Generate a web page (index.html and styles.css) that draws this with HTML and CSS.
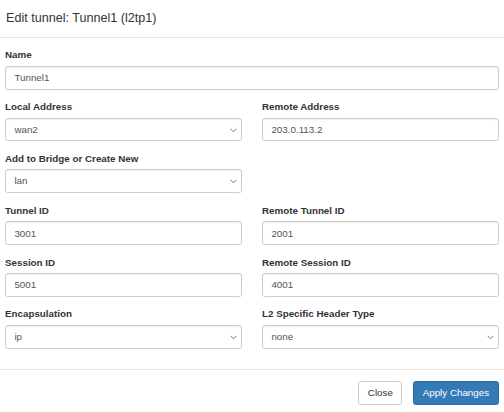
FILE: index.html
```html
<!DOCTYPE html>
<html>
<head>
<meta charset="utf-8">
<link rel="stylesheet" href="styles.css">
</head>
<body>
<div class="modal">
  <div class="modal-header"><h4 class="modal-title">Edit tunnel: Tunnel1 (l2tp1)</h4></div>
  <div class="modal-body">
    <div class="form-group full">
      <label>Name</label>
      <input class="form-control" type="text" value="Tunnel1">
    </div>
    <div class="form-group">
      <label>Local Address</label>
      <div class="select-wrap">
        <select class="form-control"><option>wan2</option></select>
        <svg class="chev" width="7" height="5" viewBox="0 0 7 5"><path d="M0.6 0.8 L3.5 3.8 L6.4 0.8" fill="none" stroke="#777" stroke-width="1"/></svg>
      </div>
    </div>
    <div class="form-group">
      <label>Remote Address</label>
      <input class="form-control" type="text" value="203.0.113.2">
    </div>
    <div class="form-group">
      <label>Add to Bridge or Create New</label>
      <div class="select-wrap">
        <select class="form-control"><option>lan</option></select>
        <svg class="chev" width="7" height="5" viewBox="0 0 7 5"><path d="M0.6 0.8 L3.5 3.8 L6.4 0.8" fill="none" stroke="#777" stroke-width="1"/></svg>
      </div>
    </div>
    <div class="form-group"></div>
    <div class="form-group">
      <label>Tunnel ID</label>
      <input class="form-control" type="text" value="3001">
    </div>
    <div class="form-group">
      <label>Remote Tunnel ID</label>
      <input class="form-control" type="text" value="2001">
    </div>
    <div class="form-group">
      <label>Session ID</label>
      <input class="form-control" type="text" value="5001">
    </div>
    <div class="form-group">
      <label>Remote Session ID</label>
      <input class="form-control" type="text" value="4001">
    </div>
    <div class="form-group">
      <label>Encapsulation</label>
      <div class="select-wrap">
        <select class="form-control"><option>ip</option></select>
        <svg class="chev" width="7" height="5" viewBox="0 0 7 5"><path d="M0.6 0.8 L3.5 3.8 L6.4 0.8" fill="none" stroke="#777" stroke-width="1"/></svg>
      </div>
    </div>
    <div class="form-group">
      <label>L2 Specific Header Type</label>
      <div class="select-wrap">
        <select class="form-control"><option>none</option></select>
        <svg class="chev" width="7" height="5" viewBox="0 0 7 5"><path d="M0.6 0.8 L3.5 3.8 L6.4 0.8" fill="none" stroke="#777" stroke-width="1"/></svg>
      </div>
    </div>
  </div>
  <div class="modal-footer">
    <button class="btn btn-default" type="button">Close</button>
    <button class="btn btn-primary" type="button">Apply Changes</button>
  </div>
</div>
</body>
</html>
```
FILE: styles.css
```css
* { box-sizing: border-box; }
html, body { margin: 0; padding: 0; background: #fff; }
body {
  font-family: "Liberation Sans", Arial, Helvetica, sans-serif;
  font-size: 9.8px;
  line-height: 1.42857;
  color: #333;
}
.modal { width: 504px; }
.modal-header {
  padding: 11.5px 6px 11.5px 6px;
  border-bottom: 1px solid #e5e5e5;
}
.modal-title {
  margin: 0;
  font-size: 12.6px;
  font-weight: normal;
  line-height: 1.1;
  color: #333;
}
.modal-body {
  padding: 10.5px 5px 9.5px 5px;
  display: grid;
  grid-template-columns: 1fr 1fr;
  column-gap: 20px;
}
.form-group { margin-bottom: 10.5px; }
.form-group.full { grid-column: 1 / span 2; }
label {
  display: block;
  font-weight: bold;
  margin-bottom: 3.5px;
  height: 14px;
  line-height: 14px;
}
.form-control {
  display: block;
  width: 100%;
  height: 23.8px;
  padding: 4.2px 8.4px;
  font-family: inherit;
  font-size: 9.8px;
  line-height: 1.42857;
  color: #555;
  background: #fff;
  border: 1px solid #ccc;
  border-radius: 2.8px;
  box-shadow: inset 0 1px 1px rgba(0,0,0,.075);
  margin: 0;
  outline: none;
}
select.form-control {
  -webkit-appearance: none;
  appearance: none;
  padding-top: 0;
  padding-bottom: 0;
}
.select-wrap { position: relative; }
.chev {
  position: absolute;
  right: 5px;
  top: 10px;
}
.modal-footer {
  border-top: 1px solid #e5e5e5;
  padding: 11px 5.5px;
  display: flex;
  justify-content: flex-end;
  gap: 11px;
}
.btn {
  font-family: inherit;
  font-size: 9.8px;
  line-height: 1.42857;
  padding: 4.2px 8.4px;
  height: 24px;
  border: 1px solid transparent;
  border-radius: 2.8px;
  margin: 0;
}
.btn-default { background: #fff; color: #333; border-color: #ccc; }
.btn-primary { background: #337ab7; color: #fff; border-color: #2e6da4; }
```
